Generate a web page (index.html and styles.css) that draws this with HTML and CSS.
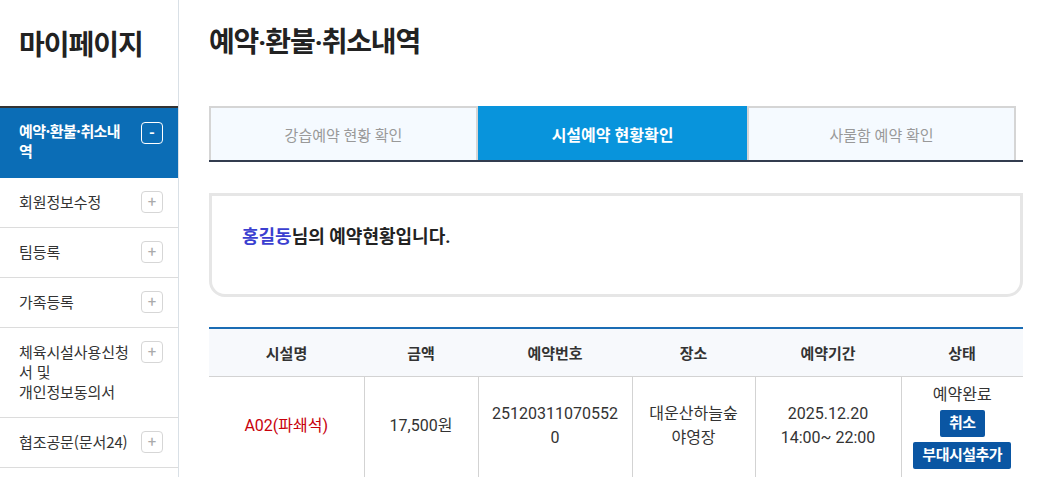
FILE: index.html
```html
<!DOCTYPE html>
<html lang="ko">
<head>
<meta charset="utf-8">
<title>마이페이지</title>
<link rel="stylesheet" href="styles.css">
</head>
<body>
<div class="page">
  <aside class="side">
    <h1 class="side-title">마이페이지</h1>
    <ul class="menu">
      <li class="menu-item active"><span class="menu-text">예약·환불·취소내역</span><span class="toggle">-</span></li>
      <li class="menu-item"><span class="menu-text">회원정보수정</span><span class="toggle">+</span></li>
      <li class="menu-item"><span class="menu-text">팀등록</span><span class="toggle">+</span></li>
      <li class="menu-item"><span class="menu-text">가족등록</span><span class="toggle">+</span></li>
      <li class="menu-item"><span class="menu-text">체육시설사용신청서 및<br>개인정보동의서</span><span class="toggle">+</span></li>
      <li class="menu-item"><span class="menu-text">협조공문(문서24)</span><span class="toggle">+</span></li>
    </ul>
  </aside>
  <main class="main">
    <h2 class="page-title">예약·환불·취소내역</h2>
    <div class="tabs">
      <ul class="tab-list">
        <li class="tab">강습예약 현황 확인</li>
        <li class="tab on">시설예약 현황확인</li>
        <li class="tab">사물함 예약 확인</li>
      </ul>
    </div>
    <div class="notice">
      <p class="notice-text"><span class="user">홍길동</span>님의 예약현황입니다.</p>
    </div>
    <table class="list">
      <colgroup>
        <col class="c1"><col class="c2"><col class="c3"><col class="c4"><col class="c5"><col class="c6">
      </colgroup>
      <thead>
        <tr><th>시설명</th><th>금액</th><th>예약번호</th><th>장소</th><th>예약기간</th><th>상태</th></tr>
      </thead>
      <tbody>
        <tr>
          <td class="fac">A02(파쇄석)</td>
          <td>17,500원</td>
          <td class="num">251203110705520</td>
          <td>대운산하늘숲<br>야영장</td>
          <td>2025.12.20<br>14:00~ 22:00</td>
          <td>
            <div class="status">
              <span class="status-text">예약완료</span>
              <span class="btn">취소</span>
              <span class="btn btn-add">부대시설추가</span>
            </div>
          </td>
        </tr>
      </tbody>
    </table>
  </main>
</div>
</body>
</html>
```
FILE: styles.css
```css
* { box-sizing: border-box; }
html, body { margin: 0; padding: 0; background: #fff; }
body {
  font-family: Roboto, "Noto Sans CJK KR", sans-serif;
  color: #333;
  overflow: hidden;
}
ul { list-style: none; margin: 0; padding: 0; }
h1, h2, p { margin: 0; }

.page { display: flex; width: 1043px; min-height: 477px; }

.side {
  width: 179px;
  flex: none;
  border-right: 1px solid #d9e0e6;
  font-family: "Noto Sans CJK KR", Roboto, sans-serif;
}
.side-title {
  height: 106px;
  padding: 25px 0 0 19px;
  font-size: 28px;
  line-height: 36px;
  font-weight: 700;
  color: #222;
  letter-spacing: -1px;
}
.menu-item {
  display: flex;
  align-items: flex-start;
  padding: 14px 15px 15px 19px;
  border-bottom: 1px solid #dcdcdc;
  font-size: 15px;
  line-height: 20px;
  color: #333;
  letter-spacing: -0.1px;
}
.menu-text { flex: 1; min-width: 0; padding-right: 10px; }
.toggle {
  flex: none;
  width: 22px;
  height: 22px;
  margin-top: -1px;
  margin-bottom: -1px;
  border: 1px solid #d6d6d6;
  border-radius: 4px;
  display: flex;
  align-items: center;
  justify-content: center;
  font-family: Roboto, sans-serif;
  font-size: 15px;
  line-height: 1;
  color: #aaa;
  letter-spacing: 0;
}
.menu-item.active {
  border-top: 2px solid #333;
  border-bottom: 0;
  background: #0b6db6;
  color: #fff;
  font-weight: 700;
  padding: 13px 15px 17px 19px;
  height: 72px;
  letter-spacing: -0.6px;
}
.menu-item.active .toggle {
  border-color: #fff;
  color: #fff;
  margin-top: 1px;
  font-weight: 700;
}

.main {
  flex: 1;
  padding: 25px 20px 0 30px;
}
.page-title {
  font-size: 28px;
  line-height: 36px;
  font-weight: 700;
  color: #222;
  letter-spacing: -1.2px;
  margin-bottom: 45px;
}

.tabs { border-bottom: 2px solid #323c4f; }
.tab-list { display: flex; }
.tab {
  width: 269px;
  height: 54px;
  border: 2px solid #d5d5d5;
  border-bottom: 0;
  background: #f5faff;
  color: #999;
  font-size: 15px;
  display: flex;
  align-items: center;
  justify-content: center;
}
.tab.on {
  background: #0894dc;
  border-color: #0894dc;
  color: #fff;
  font-weight: 700;
  font-size: 16px;
}

.notice {
  margin-top: 31px;
  height: 104px;
  border: 3px solid #e6e6e6;
  border-radius: 0 0 16px 16px;
  padding: 28px 30px;
}
.notice-text {
  font-size: 18px;
  line-height: 26px;
  font-weight: 700;
  color: #222;
}
.user { color: #3b3fd0; }

.list {
  margin-top: 30px;
  width: 100%;
  border-collapse: collapse;
  table-layout: fixed;
  border-top: 2px solid #1a6cb4;
}
.c1 { width: 155px; }
.c2 { width: 114px; }
.c3 { width: 154px; }
.c4 { width: 123px; }
.c5 { width: 146px; }
.c6 { width: 122px; }
.list th {
  background: #f7f9fc;
  height: 48px;
  border-bottom: 1px solid #d3d3d3;
  font-size: 15px;
  font-weight: 700;
  color: #333;
  padding: 0;
}
.list td {
  border-left: 1px solid #d3d3d3;
  text-align: center;
  vertical-align: middle;
  font-size: 16px;
  line-height: 24px;
  color: #333;
  padding: 6px 10px 10px;
  word-break: break-all;
}
.list td:first-child { border-left: 0; }
.list td.fac { color: #c8000b; }
.status {
  display: flex;
  flex-direction: column;
  align-items: center;
}
.status-text { line-height: 24px; }
.btn {
  display: inline-block;
  margin-top: 3px;
  height: 27px;
  line-height: 27px;
  padding: 0 9px;
  background: #0a56a3;
  color: #fff;
  font-size: 15px;
  font-weight: 700;
  border-radius: 2px;
  letter-spacing: -0.5px;
}
.btn-add { margin-top: 5px; }
```
